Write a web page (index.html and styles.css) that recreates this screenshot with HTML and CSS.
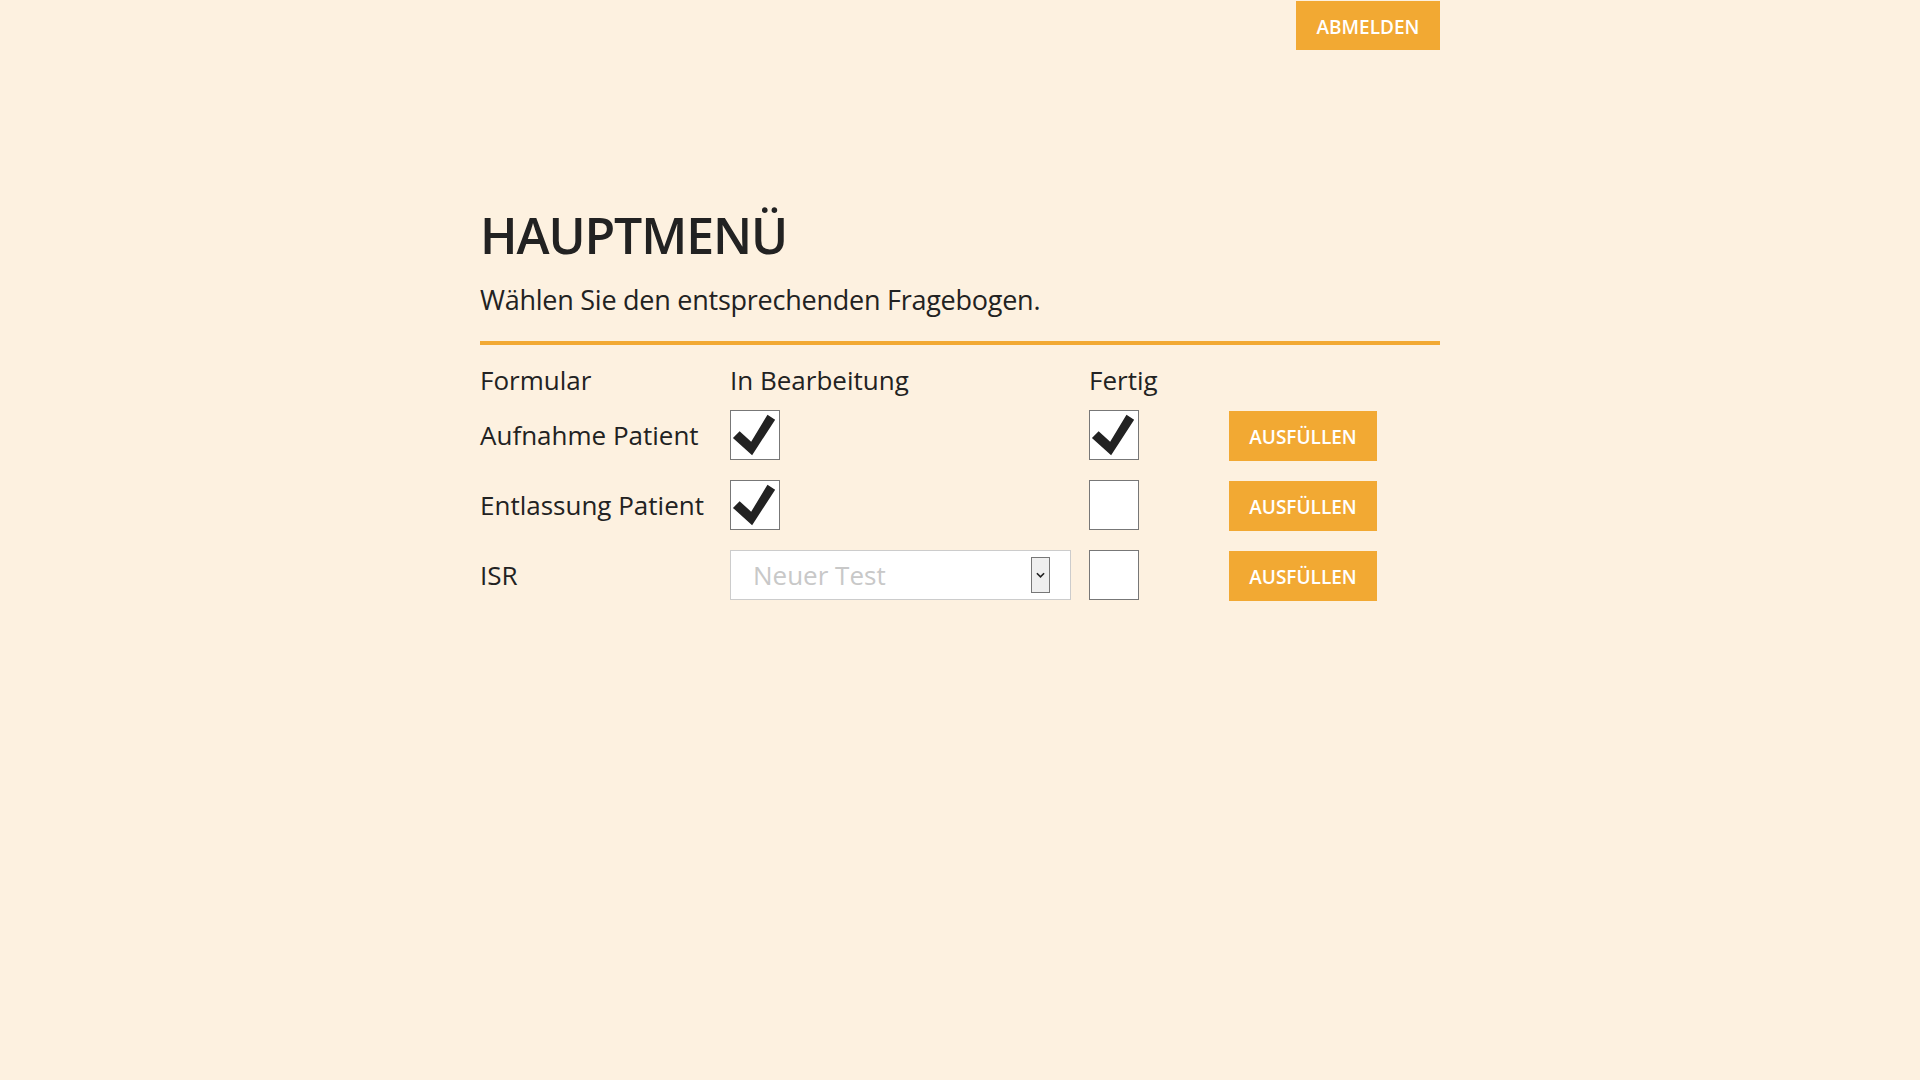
FILE: index.html
```html
<!DOCTYPE html>
<html lang="de">
<head>
<meta charset="utf-8">
<title>Hauptmenü</title>
<link rel="stylesheet" href="styles.css">
</head>
<body>
<div class="topbar">
  <button class="btn btn-logout">ABMELDEN</button>
</div>
<main class="main">
  <header class="intro">
    <h1 class="title">HAUPTMENÜ</h1>
    <p class="subtitle">Wählen Sie den entsprechenden Fragebogen.</p>
  </header>
  <div class="table">
    <div class="row head">
      <div class="cell">Formular</div>
      <div class="cell">In Bearbeitung</div>
      <div class="cell">Fertig</div>
      <div class="cell"></div>
    </div>
    <div class="rows">
      <div class="row">
        <div class="cell">Aufnahme Patient</div>
        <div class="cell"><span class="box"><svg class="check" viewBox="0 0 50 50"><polygon points="2,28 9,21 21,32 38,4 46,9 22,46"/></svg></span></div>
        <div class="cell"><span class="box"><svg class="check" viewBox="0 0 50 50"><polygon points="2,28 9,21 21,32 38,4 46,9 22,46"/></svg></span></div>
        <div class="cell cell-btn"><button class="btn btn-fill">AUSFÜLLEN</button></div>
      </div>
      <div class="row">
        <div class="cell">Entlassung Patient</div>
        <div class="cell"><span class="box"><svg class="check" viewBox="0 0 50 50"><polygon points="2,28 9,21 21,32 38,4 46,9 22,46"/></svg></span></div>
        <div class="cell"><span class="box"></span></div>
        <div class="cell cell-btn"><button class="btn btn-fill">AUSFÜLLEN</button></div>
      </div>
      <div class="row">
        <div class="cell">ISR</div>
        <div class="cell">
          <div class="select">
            <span class="placeholder">Neuer Test</span>
            <span class="arrow"><svg viewBox="0 0 10 6" class="chev"><polyline points="1,1 5,5 9,1"/></svg></span>
          </div>
        </div>
        <div class="cell"><span class="box"></span></div>
        <div class="cell cell-btn"><button class="btn btn-fill">AUSFÜLLEN</button></div>
      </div>
    </div>
  </div>
</main>
</body>
</html>
```

FILE: styles.css
```css
html, body {
  margin: 0;
  padding: 0;
}
body {
  background: #fdf1e0;
  color: #222222;
  font-family: "Open Sans", "Noto Sans", sans-serif;
  width: 1920px;
  height: 1080px;
  overflow: hidden;
}
.topbar {
  width: 960px;
  margin: 0 auto;
  display: flex;
  justify-content: flex-end;
  align-items: flex-start;
  height: 50px;
}
.btn {
  border: none;
  background: #f2a933;
  color: #ffffff;
  font-family: "Open Sans", "Noto Sans", sans-serif;
  font-weight: 600;
  padding: 2px 0 0;
  cursor: pointer;
}
.btn-logout {
  width: 144px;
  height: 49px;
  margin-top: 1px;
  font-size: 19px;
}
.main {
  width: 960px;
  margin: 155px auto 0;
}
.intro {
  border-bottom: 4px solid #f2a933;
  padding-bottom: 23px;
}
.title {
  margin: 0;
  font-size: 50px;
  line-height: 60px;
  font-weight: 600;
  letter-spacing: -1.1px;
}
.subtitle {
  margin: 17px 0 0;
  font-size: 27px;
  line-height: 36px;
  font-weight: 400;
  letter-spacing: -0.25px;
}
.table {
  margin-top: 10px;
  font-size: 26px;
}
.row {
  display: grid;
  grid-template-columns: 250px 359px 140px 148px;
  grid-template-rows: 50px;
  height: 50px;
  align-items: center;
}
.row.head {
  margin-bottom: 5px;
}
.rows {
  display: flex;
  flex-direction: column;
  gap: 20px;
}
.cell {
  display: flex;
  align-items: center;
  white-space: nowrap;
}
.cell-btn {
  align-self: start;
  padding-top: 1px;
}
.box {
  display: block;
  width: 48px;
  height: 48px;
  background: #ffffff;
  border: 1px solid #777777;
}
.check {
  display: block;
  width: 48px;
  height: 48px;
  fill: #222222;
}
.btn-fill {
  width: 148px;
  height: 50px;
  font-size: 19px;
}
.select {
  box-sizing: border-box;
  width: 341px;
  height: 50px;
  background: #ffffff;
  border: 1px solid #cccccc;
  display: flex;
  align-items: center;
  justify-content: space-between;
  padding: 0 20px 0 22px;
}
.placeholder {
  color: #c8c8c8;
}
.arrow {
  box-sizing: border-box;
  width: 19px;
  height: 36px;
  background: #efefef;
  border: 1px solid #777777;
  display: flex;
  align-items: center;
  justify-content: center;
}
.chev {
  width: 9px;
  height: 6px;
  fill: none;
  stroke: #222222;
  stroke-width: 1.8;
}
```
